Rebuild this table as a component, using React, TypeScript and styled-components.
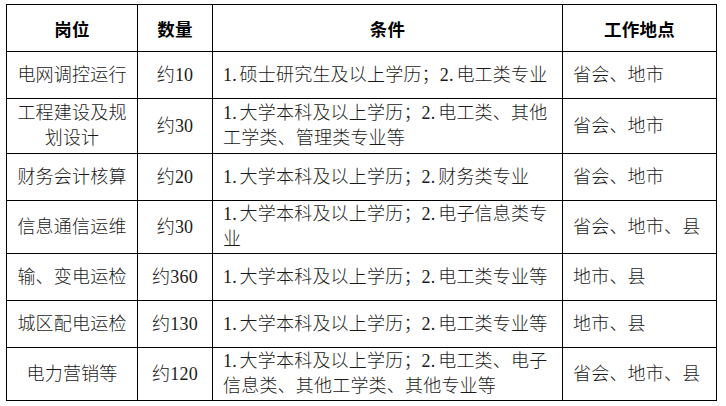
import React from 'react';
import styled, {createGlobalStyle} from 'styled-components';

const GlobalStyle = createGlobalStyle`
    html, body {
        margin: 0;
        padding: 0;
        background: #ffffff;
    }
`;

const Page = styled.div`
    padding: 4px 0 0 6px;
    width: 726px;
    height: 406px;
    box-sizing: border-box;
    font-family: "Liberation Serif", "Noto Sans CJK SC", serif;
    color: #1a1a1a;
`;

const Table = styled.table`
    border-collapse: collapse;
    table-layout: fixed;
    width: 710px;
`;

const Col = styled.col<{$w: number}>`
    width: ${({$w}) => $w}px;
`;

const HeadCell = styled.th`
    height: 47px;
    padding: 0;
    border: 1px solid #000;
    font-family: "Noto Sans CJK SC", sans-serif;
    font-weight: 700;
    font-size: 17.5px;
    letter-spacing: 0.3px;
    color: #000;
    text-align: center;
    vertical-align: middle;
    box-sizing: border-box;
`;

const Cell = styled.td<{$align?: 'left' | 'center'; $h: number}>`
    height: ${({$h}) => $h}px;
    padding: 0 10px;
    border: 1px solid #000;
    font-size: 18px;
    font-weight: 300;
    line-height: 25px;
    letter-spacing: 0.2px;
    word-spacing: -2px;
    text-align: ${({$align}) => $align ?? 'center'};
    vertical-align: middle;
    box-sizing: border-box;
`;

const Line = styled.div`
    white-space: nowrap;
`;

type Row = {
    post: string[];
    count: string;
    cond: string[];
    place: string;
    h: number;
};

const rows: Row[] = [
    {post: ['电网调控运行'], count: '约10', cond: ['1. 硕士研究生及以上学历；2. 电工类专业'], place: '省会、地市', h: 47},
    {
        post: ['工程建设及规', '划设计'],
        count: '约30',
        cond: ['1. 大学本科及以上学历；2. 电工类、其他', '工学类、管理类专业等'],
        place: '省会、地市',
        h: 55
    },
    {post: ['财务会计核算'], count: '约20', cond: ['1. 大学本科及以上学历；2. 财务类专业'], place: '省会、地市', h: 47},
    {
        post: ['信息通信运维'],
        count: '约30',
        cond: ['1. 大学本科及以上学历；2. 电子信息类专', '业'],
        place: '省会、地市、县',
        h: 53
    },
    {post: ['输、变电运检'], count: '约360', cond: ['1. 大学本科及以上学历；2. 电工类专业等'], place: '地市、县', h: 47},
    {post: ['城区配电运检'], count: '约130', cond: ['1. 大学本科及以上学历；2. 电工类专业等'], place: '地市、县', h: 47},
    {
        post: ['电力营销等'],
        count: '约120',
        cond: ['1. 大学本科及以上学历；2. 电工类、电子', '信息类、其他工学类、其他专业等'],
        place: '省会、地市、县',
        h: 53
    }
];

export default function App() {
    return (
        <Page>
            <GlobalStyle />
            <Table>
                <colgroup>
                    <Col $w={131} />
                    <Col $w={75} />
                    <Col $w={350} />
                    <Col $w={154} />
                </colgroup>
                <thead>
                    <tr>
                        <HeadCell>岗位</HeadCell>
                        <HeadCell>数量</HeadCell>
                        <HeadCell>条件</HeadCell>
                        <HeadCell>工作地点</HeadCell>
                    </tr>
                </thead>
                <tbody>
                    {rows.map((r, i) => (
                        <tr key={i}>
                            <Cell $h={r.h}>
                                {r.post.map((p, j) => (
                                    <Line key={j}>{p}</Line>
                                ))}
                            </Cell>
                            <Cell $h={r.h}>{r.count}</Cell>
                            <Cell $h={r.h} $align="left">
                                {r.cond.map((c, j) => (
                                    <Line key={j}>{c}</Line>
                                ))}
                            </Cell>
                            <Cell $h={r.h} $align="left">{r.place}</Cell>
                        </tr>
                    ))}
                </tbody>
            </Table>
        </Page>
    );
}
